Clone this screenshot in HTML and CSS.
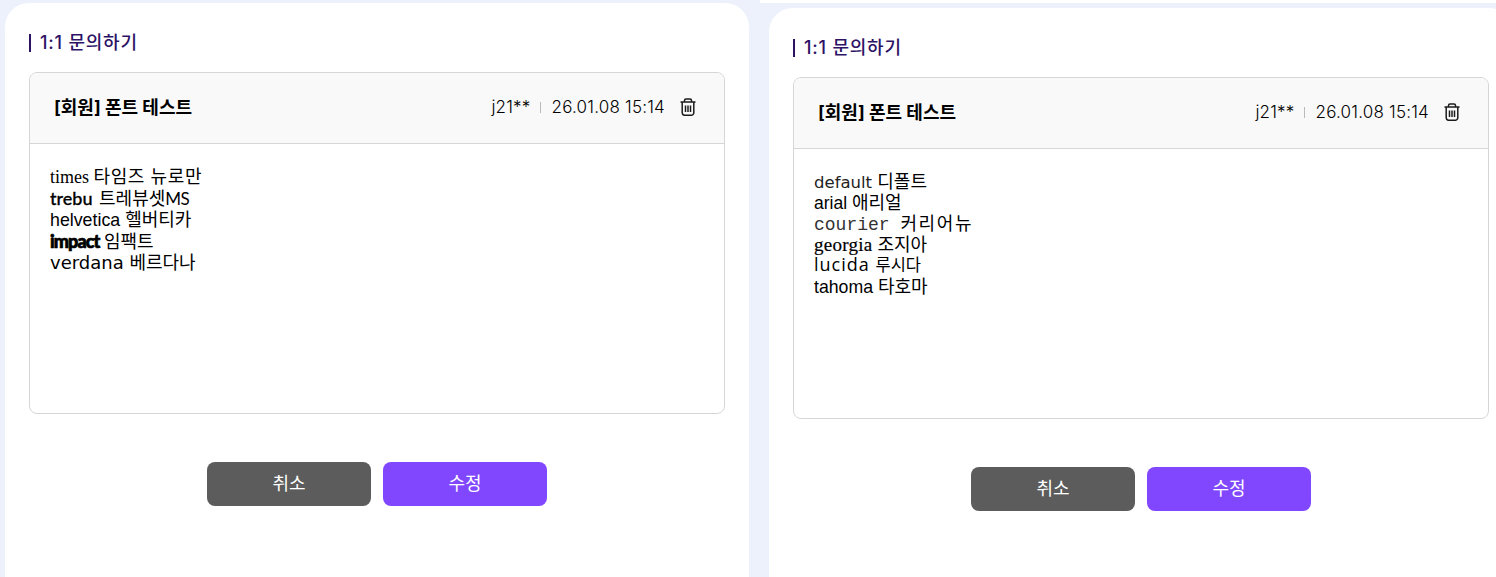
FILE: index.html
```html
<!DOCTYPE html>
<html lang="ko">
<head>
  <meta charset="UTF-8">
  <meta name="viewport" content="width=device-width, initial-scale=1.0">
  <title>1:1 문의하기</title>
  <link rel="stylesheet" href="styles.css">
</head>
<body>
  <div class="shots">
    <!-- left capture -->
    <div class="shot shot-left">
      <section class="panel">
        <h2 class="panel-title">1:1 문의하기</h2>
        <div class="card">
          <div class="card-head">
            <strong class="card-subject">[회원] 폰트 테스트</strong>
            <div class="card-meta">
              <span>j21**</span>
              <i class="meta-sep"></i>
              <span>26.01.08 15:14</span>
              <button class="trash" type="button" aria-label="삭제">
                <svg width="16" height="18" viewBox="0 0 16 18" fill="none" stroke="#1c1c1c" stroke-width="1.5">
                  <path d="M.5 4h15M4.500 4V2.500A1.500 1.500 0 0 1 6 1h4a1.500 1.500 0 0 1 1.500 1.500V4"/>
                  <path d="M2.200 4v10.800A2.500 2.500 0 0 0 4.700 17.300h6.600a2.500 2.500 0 0 0 2.500-2.500V4"/>
                  <path d="M5.500 7.500v6.500M8 7.500v6.500M10.500 7.500v6.500"/>
                </svg>
              </button>
            </div>
          </div>
          <div class="card-body">
            <p class="f-times">times <span class="ko">타임즈 뉴로만</span></p>
            <p class="f-trebu">trebu <span class="ko">트레뷰셋</span><span class="ms">MS</span></p>
            <p class="f-helvetica">helvetica <span class="ko">헬버티카</span></p>
            <p class="f-impact"><b>impact</b> <span class="ko">임팩트</span></p>
            <p class="f-verdana">verdana <span class="ko">베르다나</span></p>
          </div>
        </div>
        <div class="actions">
          <button class="btn btn-cancel" type="button">취소</button>
          <button class="btn btn-save" type="button">수정</button>
        </div>
      </section>
    </div>

    <!-- right capture -->
    <div class="shot shot-right">
      <section class="panel">
        <h2 class="panel-title">1:1 문의하기</h2>
        <div class="card">
          <div class="card-head">
            <strong class="card-subject">[회원] 폰트 테스트</strong>
            <div class="card-meta">
              <span>j21**</span>
              <i class="meta-sep"></i>
              <span>26.01.08 15:14</span>
              <button class="trash" type="button" aria-label="삭제">
                <svg width="16" height="18" viewBox="0 0 16 18" fill="none" stroke="#1c1c1c" stroke-width="1.5">
                  <path d="M.5 4h15M4.500 4V2.500A1.500 1.500 0 0 1 6 1h4a1.500 1.500 0 0 1 1.500 1.500V4"/>
                  <path d="M2.200 4v10.800A2.500 2.500 0 0 0 4.700 17.300h6.600a2.500 2.500 0 0 0 2.500-2.500V4"/>
                  <path d="M5.500 7.500v6.500M8 7.500v6.500M10.500 7.500v6.500"/>
                </svg>
              </button>
            </div>
          </div>
          <div class="card-body">
            <p class="f-default">default <span class="ko">디폴트</span></p>
            <p class="f-arial">arial <span class="ko">애리얼</span></p>
            <p class="f-courier">courier <span class="ko">커리어뉴</span></p>
            <p class="f-georgia">georgia <span class="ko">조지아</span></p>
            <p class="f-lucida">lucida <span class="ko">루시다</span></p>
            <p class="f-tahoma">tahoma <span class="ko">타호마</span></p>
          </div>
        </div>
        <div class="actions">
          <button class="btn btn-cancel" type="button">취소</button>
          <button class="btn btn-save" type="button">수정</button>
        </div>
      </section>
    </div>
  </div>
</body>
</html>
```

FILE: styles.css
```css
html, body {
  margin: 0;
  padding: 0;
  height: 100%;
  overflow: hidden;
}

body {
  background: #fff;
  font-family: "Inter", "Noto Sans CJK KR", sans-serif;
  color: #000;
}

.shots {
  display: flex;
  width: 1496px;
  height: 577px;
  overflow: hidden;
}

.shot {
  flex: none;
  height: 577px;
  box-sizing: border-box;
  background: #edf1fc;
}

.shot-left {
  width: 760px;
  padding: 3px 0 0 5px;
}

.shot-right {
  width: 736px;
  padding: 5px 0 0 9px;
  border-top: 3px solid #fff;
}

.panel {
  width: 744px;
  height: 600px;
  box-sizing: border-box;
  padding: 31px 24px 0;
  background: #fff;
  border-radius: 24px;
}

.panel-title {
  margin: 0;
  height: 18px;
  border-left: 2px solid #2d1266;
  padding-left: 9px;
  font-size: 18px;
  font-weight: 500;
  line-height: 17px;
  letter-spacing: .8px;
  color: #2d1266;
}

.card {
  margin-top: 20px;
  height: 342px;
  box-sizing: border-box;
  border: 1px solid #d6d6d6;
  border-radius: 8px;
  overflow: hidden;
}

.card-head {
  display: flex;
  justify-content: space-between;
  align-items: center;
  height: 71px;
  box-sizing: border-box;
  padding: 0 27px 3px 24px;
  background: #f9f9f9;
  border-bottom: 1px solid #d6d6d6;
}

.card-subject {
  margin-bottom: 2px;
  font-size: 18px;
  font-weight: 700;
}

.card-meta {
  display: flex;
  align-items: center;
  font-size: 17px;
  font-weight: 300;
  letter-spacing: .2px;
}

.meta-sep {
  width: 1px;
  height: 11px;
  margin: 2px 11px 0 9px;
  background: #bbb;
}

.trash {
  display: flex;
  margin: 0 1px 0 15px;
  padding: 0;
  border: 0;
  background: none;
  cursor: pointer;
}

.card-body {
  padding: 21px 20px;
}

.card-body p {
  margin: 0;
  height: 21.5px;
  line-height: 21.5px;
  white-space: nowrap;
}

.shot-right .card-body p {
  height: 21px;
  line-height: 21px;
}

.ko {
  display: inline-block;
  font-family: "Noto Sans CJK KR", sans-serif;
  font-size: 18px;
  font-weight: 400;
  color: #000;
  -webkit-text-stroke: 0;
  letter-spacing: 0;
}

.f-times { font-family: "Liberation Serif", serif; font-size: 18px; }
.f-times .ko { letter-spacing: .6px; }
.f-georgia { font-family: "Liberation Serif", serif; font-size: 19px; letter-spacing: .25px; -webkit-text-stroke: .2px #000; }
.f-trebu { font-family: "Lato", sans-serif; font-size: 18px; font-weight: 500; -webkit-text-stroke: .3px #000; }
.f-trebu .ko { margin-left: 2px; }
.f-trebu .ms { font-size: 17px; font-weight: 400; letter-spacing: -.6px; -webkit-text-stroke: 0; }
.f-helvetica { font-family: "Liberation Sans", sans-serif; font-size: 17.8px; }
.f-arial { font-family: "Liberation Sans", sans-serif; font-size: 17.5px; }
.f-impact { font-family: "Liberation Sans", sans-serif; }
.f-impact b { font-family: "Lato", sans-serif; font-size: 18px; font-weight: 900; letter-spacing: -.9px; -webkit-text-stroke: .7px #000; }
.f-verdana { font-family: "DejaVu Sans", sans-serif; font-size: 18px; }
.f-default { font-family: "DejaVu Sans", sans-serif; font-size: 16.500px; color: #222; }
.f-courier { font-family: "Liberation Mono", monospace; font-size: 18px; color: #333; }
.f-courier .ko { letter-spacing: 1.6px; }
.f-lucida { font-family: "Open Sans", sans-serif; font-size: 18px; letter-spacing: 1px; }
.f-lucida .ko { font-size: 16.500px; }
.f-tahoma { font-family: "Liberation Sans", sans-serif; font-size: 17.7px; }

.actions {
  display: flex;
  justify-content: center;
  gap: 12px;
  margin-top: 48px;
}

.btn {
  width: 164px;
  height: 44px;
  padding: 0 0 4px;
  border: 0;
  border-radius: 8px;
  font-family: "Noto Sans CJK KR", sans-serif;
  font-size: 18px;
  color: #fff;
  cursor: pointer;
}

.btn-cancel { background: #5c5c5c; }
.btn-save { background: #8147ff; }
```
